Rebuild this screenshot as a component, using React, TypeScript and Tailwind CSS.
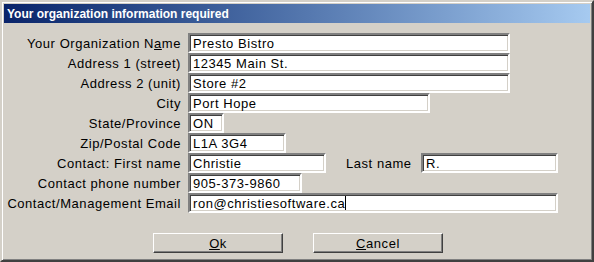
import React from 'react';

const font = { fontFamily: '"Liberation Sans", Arial, sans-serif' };

type FieldProps = { width: string; value: React.ReactNode };

const Field: React.FC<FieldProps> = ({ width, value }) => (
    <div className={`${width} h-[20px] border-2 border-t-[#808080] border-l-[#808080] border-r-white border-b-white bg-white shadow-[inset_1px_1px_0_#404040,inset_-1px_-1px_0_#d4d0c8] pl-[3px] flex items-center text-[13px] tracking-[0.55px] text-black leading-none whitespace-nowrap overflow-hidden`}>
        {value}
    </div>
);

const Row: React.FC<{ label: React.ReactNode; children: React.ReactNode }> = ({ label, children }) => (
    <div className="flex items-center h-[20px]">
        <div className="w-[177px] text-right text-[13px] tracking-[0.55px] text-black leading-none whitespace-nowrap">{label}</div>
        <div className="ml-[7px] flex items-center">{children}</div>
    </div>
);

const Button: React.FC<{ children: React.ReactNode }> = ({ children }) => (
    <div className="w-[130px] h-[20px] border border-t-white border-l-white border-r-[#404040] border-b-[#404040] shadow-[inset_-1px_-1px_0_#808080] bg-[#d4d0c8] flex items-center justify-center text-[13px] tracking-[0.55px] text-black leading-none">
        {children}
    </div>
);

export default function App() {
    return (
        <div style={font} className="w-[594px] h-[262px] bg-[#d4d0c8] border-2 border-t-[#d4d0c8] border-l-[#d4d0c8] border-r-[#404040] border-b-[#404040] shadow-[inset_1px_1px_0_#ffffff,inset_-1px_-1px_0_#808080] p-[2px] flex flex-col">
            <div className="h-[19px] bg-gradient-to-r from-[#0a246a] to-[#a6caf0] flex items-center pl-[3px]">
                <span className="text-white font-bold text-[12px] leading-none">Your organization information required</span>
            </div>
            <div className="mt-[10px] flex flex-col">
                <Row label={<>Your Organization N<u>a</u>me</>}>
                    <Field width="w-[322px]" value="Presto Bistro" />
                </Row>
                <Row label="Address 1 (street)">
                    <Field width="w-[322px]" value="12345 Main St." />
                </Row>
                <Row label="Address 2 (unit)">
                    <Field width="w-[322px]" value="Store #2" />
                </Row>
                <Row label="City">
                    <Field width="w-[242px]" value="Port Hope" />
                </Row>
                <Row label="State/Province">
                    <Field width="w-[36px]" value="ON" />
                </Row>
                <Row label="Zip/Postal Code">
                    <Field width="w-[98px]" value="L1A 3G4" />
                </Row>
                <Row label="Contact: First name">
                    <Field width="w-[138px]" value="Christie" />
                    <span className="ml-[20px] w-[67px] text-[13px] tracking-[0.55px] leading-none whitespace-nowrap">Last name</span>
                    <div className="ml-[8px]">
                        <Field width="w-[137px]" value="R." />
                    </div>
                </Row>
                <Row label="Contact phone number">
                    <Field width="w-[114px]" value="905-373-9860" />
                </Row>
                <Row label="Contact/Management Email">
                    <Field
                        width="w-[370px]"
                        value={<>ron@christiesoftware.ca<span className="inline-block w-px h-[14px] bg-black" /></>}
                    />
                </Row>
            </div>
            <div className="mt-[20px] flex pl-[149px] gap-[30px]">
                <Button><u>O</u>k</Button>
                <Button><u>C</u>ancel</Button>
            </div>
        </div>
    );
}
